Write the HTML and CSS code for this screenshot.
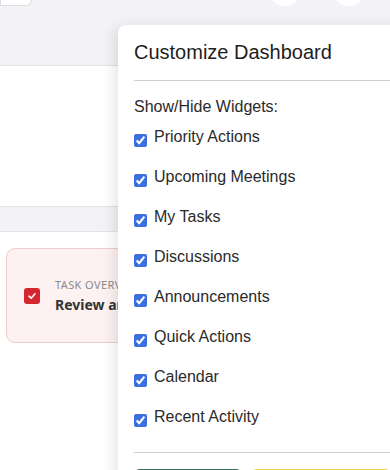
FILE: index.html
```html
<!DOCTYPE html>
<html lang="en">
<head>
  <meta charset="UTF-8" />
  <meta name="viewport" content="width=device-width, initial-scale=1.0" />
  <title>Dashboard</title>
  <link rel="stylesheet" href="styles.css">
</head>
<body>
  <div class="topbar">
    <div class="search-box"></div>
    <div class="top-actions">
      <div class="round-btn"></div>
      <div class="round-btn"></div>
    </div>
  </div>

  <div class="summary"></div>
  <div class="band"></div>

  <div class="content">
    <div class="task-card">
      <span class="task-check">
        <svg width="10" height="10" viewBox="0 0 10 10"><path d="M2 5.2 L4.2 7.2 L8 2.8" fill="none" stroke="#fff" stroke-width="1.6" stroke-linecap="round" stroke-linejoin="round"/></svg>
      </span>
      <div class="task-text">
        <div class="task-label">TASK OVERVIEW</div>
        <div class="task-title">Review and approve budget</div>
      </div>
    </div>
  </div>

  <!-- Customize dropdown panel -->
  <div class="customize-panel">
    <div class="panel-header">
      <h2>Customize Dashboard</h2>
    </div>
    <h3>Show/Hide Widgets:</h3>
    <div class="widget-list">
      <label class="widget-row"><input type="checkbox" checked> <span>Priority Actions</span></label>
      <label class="widget-row"><input type="checkbox" checked> <span>Upcoming Meetings</span></label>
      <label class="widget-row"><input type="checkbox" checked> <span>My Tasks</span></label>
      <label class="widget-row"><input type="checkbox" checked> <span>Discussions</span></label>
      <label class="widget-row"><input type="checkbox" checked> <span>Announcements</span></label>
      <label class="widget-row"><input type="checkbox" checked> <span>Quick Actions</span></label>
      <label class="widget-row"><input type="checkbox" checked> <span>Calendar</span></label>
      <label class="widget-row"><input type="checkbox" checked> <span>Recent Activity</span></label>
    </div>
    <div class="panel-footer">
      <button class="btn btn-save">Save</button>
      <button class="btn btn-reset">Reset</button>
    </div>
  </div>
</body>
</html>
```

FILE: styles.css
```css
:root {
  --bg-grey: #f2f2f7;
  --line: #e3e3e8;
  --text: #222222;
  --check-blue: #3b6fe0;
  --font: 'Liberation Sans', Arial, sans-serif;
}
* {
  box-sizing: border-box;
}
body {
  margin: 0;
  width: 390px;
  height: 470px;
  overflow: hidden;
  background: #ffffff;
  font-family: var(--font);
  position: relative;
}
.topbar {
  height: 66px;
  background: var(--bg-grey);
  border-bottom: 1px solid var(--line);
  display: flex;
  justify-content: space-between;
  align-items: flex-start;
  padding-right: 24px;
}
.search-box {
  width: 32px;
  height: 36px;
  margin-top: -30px;
  background: #ffffff;
  border: 1px solid #dcdce0;
  border-radius: 0 0 6px 0;
}
.top-actions {
  display: flex;
  gap: 30px;
}
.round-btn {
  width: 34px;
  height: 34px;
  margin-top: -28px;
  border-radius: 50%;
  background: #ffffff;
}
.summary {
  height: 141px;
  background: #ffffff;
  border-bottom: 1px solid var(--line);
}
.band {
  height: 25px;
  background: var(--bg-grey);
  border-bottom: 1px solid var(--line);
}
.content {
  padding: 16px 0 0 6px;
}
.task-card {
  width: 380px;
  height: 95px;
  display: flex;
  align-items: center;
  gap: 15px;
  padding-left: 17px;
  background: #fdf1f1;
  border: 1px solid #efcccc;
  border-radius: 9px;
  font-family: 'Noto Sans', sans-serif;
}
.task-check {
  width: 16px;
  height: 16px;
  border-radius: 3px;
  background: #d3262e;
  display: flex;
  align-items: center;
  justify-content: center;
}
.task-label {
  font-size: 11px;
  letter-spacing: 0.4px;
  color: #8a8a8a;
  line-height: 16px;
}
.task-title {
  font-size: 14px;
  font-weight: 700;
  color: #333333;
  line-height: 20px;
  margin-top: 2px;
}

/* dropdown */
.customize-panel {
  position: absolute;
  left: 118px;
  top: 25px;
  width: 320px;
  height: 480px;
  background: #ffffff;
  border-radius: 8px 0 0 0;
  box-shadow: -4px 2px 14px rgba(0, 0, 0, 0.10);
  padding: 15px 0 0 16px;
}
.panel-header {
  padding-bottom: 16px;
  border-bottom: 1px solid #cfcfcf;
}
.panel-header h2 {
  margin: 0;
  font-size: 20px;
  font-weight: 400;
  line-height: 24px;
  color: #1e1e1e;
}
.customize-panel h3 {
  margin: 14px 0 6px;
  font-size: 16px;
  font-weight: 400;
  line-height: 24px;
  color: #2a2a2a;
}
.widget-list {
  display: flex;
  flex-direction: column;
  gap: 16px;
}
.widget-row {
  display: flex;
  align-items: flex-start;
  height: 24px;
  font-size: 16px;
  line-height: 24px;
  color: #2a2a2a;
}
.widget-row input {
  width: 13px;
  height: 13px;
  margin: 9px 7px 0 0;
  accent-color: var(--check-blue);
}
.panel-footer {
  margin-top: 23px;
  border-top: 1px solid #cfcfcf;
  padding-top: 16px;
  display: flex;
  gap: 9px;
}
.btn {
  height: 36px;
  border: none;
  border-radius: 6px;
  font-family: var(--font);
  font-size: 15px;
}
.btn-save {
  width: 108px;
  background: #2f6d5c;
  color: #ffffff;
}
.btn-reset {
  width: 140px;
  background: #f1d34c;
  color: #222222;
}
```
